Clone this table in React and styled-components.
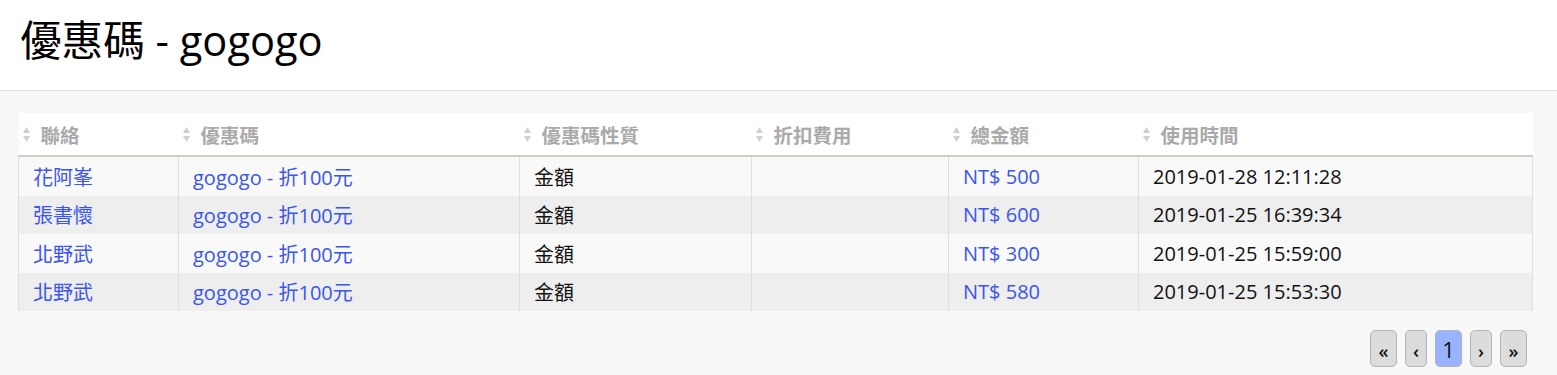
import React from 'react';
import styled, { createGlobalStyle } from 'styled-components';

const GlobalStyle = createGlobalStyle`
  html, body {
    margin: 0;
    padding: 0;
    background: #f8f8f8;
    font-family: "Open Sans", "Noto Sans CJK TC", sans-serif;
  }
`;

const Header = styled.header`
  height: 91px;
  background: #fff;
  border-bottom: 1px solid #e0e0e0;
  display: flex;
  align-items: center;
  padding: 0 20px;
  box-sizing: border-box;
`;

const Title = styled.h1`
  margin: 0;
  font-size: 41.6px;
  font-weight: 400;
  color: #000;
  position: relative;
  top: -7px;
`;

const Content = styled.main`
  padding: 22px 25px 0 18px;
`;

const Table = styled.table`
  width: 1514px;
  border-collapse: collapse;
  table-layout: fixed;
  font-size: 20px;
`;

const Th = styled.th`
  background: #fff;
  height: 42px;
  padding: 0 0 0 4px;
  text-align: left;
  font-weight: 700;
  font-size: 19.5px;
  color: #aaaaaa;
  border-bottom: 2px solid #cfcfc4;
  white-space: nowrap;
`;

const HeadInner = styled.span`
  display: inline-flex;
  align-items: center;
  gap: 11px;
`;

const Row = styled.tr`
  background: ${p => (p.$even ? '#eeeeee' : '#f9f9f9')};
`;

const Td = styled.td`
  height: 38.5px;
  padding: 0 14px;
  border-left: 1px solid #dedede;
  border-right: 1px solid #dedede;
  color: ${p => (p.$link ? '#3a55f0' : '#111')};
  white-space: nowrap;
`;

const Pager = styled.nav`
  display: flex;
  justify-content: flex-end;
  gap: 8px;
  padding: 19px 5px 0 0;
`;

const PageBtn = styled.button`
  height: 37px;
  min-width: ${p => (p.$wide ? '27px' : '22px')};
  padding: 0 4px;
  border: 1px solid #b4b4b4;
  border-radius: 5px;
  background: ${p => (p.$active ? '#99b3ff' : '#dcdcdc')};
  font-family: "Open Sans", sans-serif;
  font-size: ${p => (p.$active ? '22px' : '18px')};
  font-weight: ${p => (p.$active ? 400 : 600)};
  color: #111;
  display: flex;
  align-items: center;
  justify-content: center;
  padding-top: ${p => (p.$active ? '0' : '5px')};
  box-sizing: border-box;
`;

const SortIcon = () => (
  <svg width="7" height="17" viewBox="0 0 7 17">
    <path d="M3.5 1 L7 7 H0 Z" fill="#d0d0d0" />
    <path d="M3.5 16 L7 10 H0 Z" fill="#d0d0d0" />
  </svg>
);

const columns = [
  { label: '聯絡', width: 160 },
  { label: '優惠碼', width: 341 },
  { label: '優惠碼性質', width: 232 },
  { label: '折扣費用', width: 197 },
  { label: '總金額', width: 190 },
  { label: '使用時間', width: 394 },
];

const rows = [
  ['花阿峯', 'NT$ 500', '2019-01-28 12:11:28'],
  ['張書懷', 'NT$ 600', '2019-01-25 16:39:34'],
  ['北野武', 'NT$ 300', '2019-01-25 15:59:00'],
  ['北野武', 'NT$ 580', '2019-01-25 15:53:30'],
];

export default function App() {
  return (
    <>
      <GlobalStyle />
      <Header>
        <Title>優惠碼 - gogogo</Title>
      </Header>
      <Content>
        <Table>
          <colgroup>
            {columns.map(c => (
              <col key={c.label} style={{ width: c.width }} />
            ))}
          </colgroup>
          <thead>
            <tr>
              {columns.map(c => (
                <Th key={c.label}>
                  <HeadInner>
                    <SortIcon />
                    {c.label}
                  </HeadInner>
                </Th>
              ))}
            </tr>
          </thead>
          <tbody>
            {rows.map((r, i) => (
              <Row key={i} $even={i % 2 === 1}>
                <Td $link>{r[0]}</Td>
                <Td $link>gogogo - 折100元</Td>
                <Td>金額</Td>
                <Td></Td>
                <Td $link>{r[1]}</Td>
                <Td>{r[2]}</Td>
              </Row>
            ))}
          </tbody>
        </Table>
        <Pager>
          <PageBtn $wide>«</PageBtn>
          <PageBtn>‹</PageBtn>
          <PageBtn $wide $active>1</PageBtn>
          <PageBtn>›</PageBtn>
          <PageBtn $wide>»</PageBtn>
        </Pager>
      </Content>
    </>
  );
}
